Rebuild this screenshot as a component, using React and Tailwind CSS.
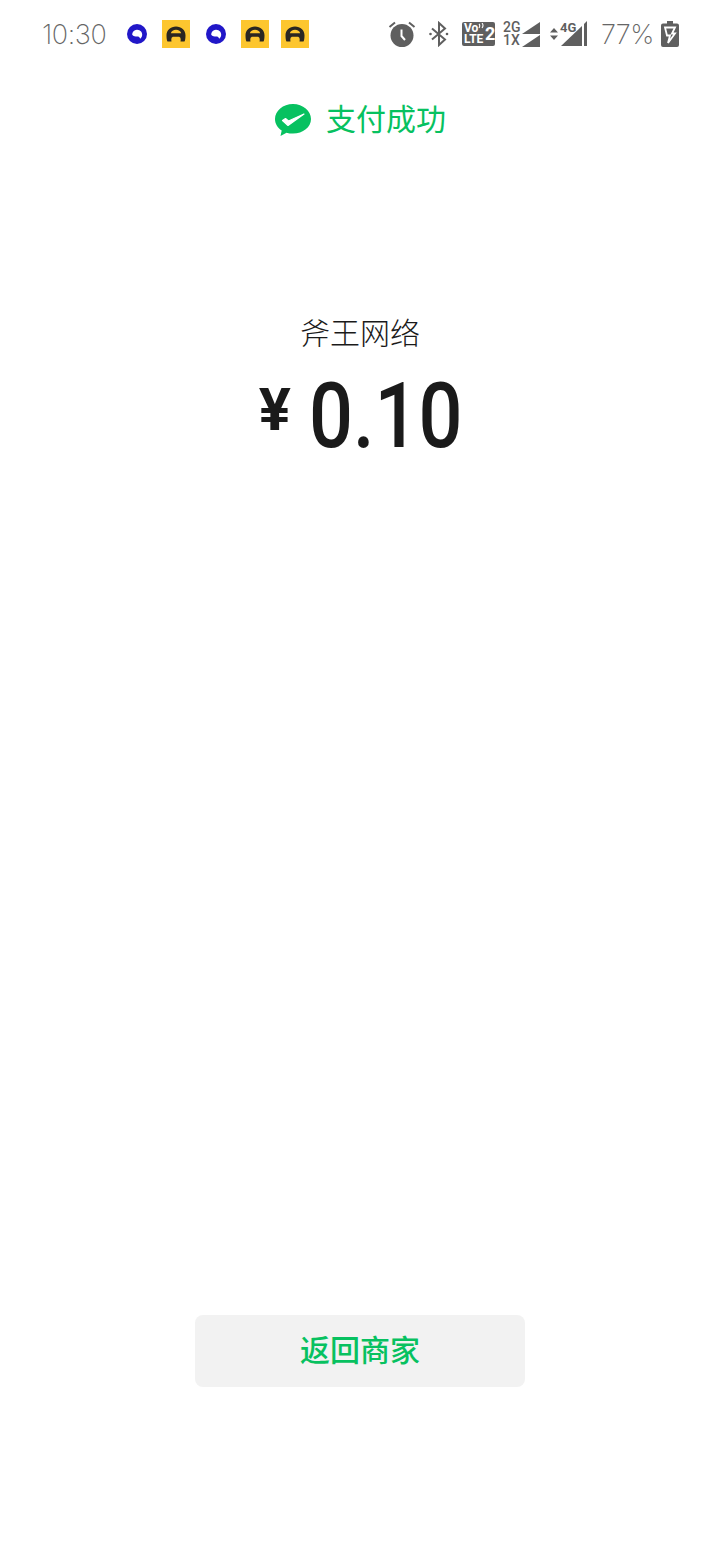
const cjk = "font-['Noto_Sans_CJK_SC',sans-serif]";

function RingIcon() {
  return (
    <svg width="20" height="20" viewBox="0 0 20 20" className="shrink-0">
      <circle cx="10" cy="10" r="10" fill="#2117c8" />
      <path d="M5.200 10.800a5 5 0 1 1 8 3.900c-.5-1.700-1.600-2.200-3-2.200-1.900 0-3.800-.2-5-1.700z" fill="#fff" />
    </svg>
  );
}

function CarIcon() {
  return (
    <svg width="28" height="28" viewBox="0 0 28 28" className="shrink-0">
      <rect width="28" height="28" fill="#fdc62f" />
      <path d="M5.500 21.500c-.7-1.200-1-3.200-1-6.200 0-5.200 4.100-8.800 9.500-8.800s9.500 3.600 9.500 8.800c0 3-.3 5-1 6.200h-4c.3-1 .3-2.200 0-3.200-.3-1-1-1.500-2-1.500h-5c-1 0-1.700.5-2 1.500-.3 1-.3 2.200 0 3.200z" fill="#2b2622" />
      <path d="M8.800 13.200c.6-2.200 2.700-3.500 5.200-3.500s4.600 1.300 5.200 3.500z" fill="#fdc62f" />
    </svg>
  );
}

function AlarmIcon() {
  return (
    <svg width="28" height="28" viewBox="0 0 28 28" className="shrink-0">
      <circle cx="14" cy="15.500" r="11.500" fill="#5f5f5f" />
      <path d="M1.500 7 7 2.500M26.500 7 21 2.500" stroke="#5f5f5f" strokeWidth="2" fill="none" />
      <path d="M13.500 9.500v6.500l3.500 4" stroke="#fff" strokeWidth="2" fill="none" />
    </svg>
  );
}

function BluetoothIcon() {
  return (
    <svg width="20" height="26" viewBox="0 0 20 26" className="shrink-0">
      <path d="M3 7.500 16 18.500 10 24V2l6 5.500L3 18.500" fill="none" stroke="#5f5f5f" strokeWidth="2" />
      <circle cx="1.500" cy="13" r="1.300" fill="#5f5f5f" />
      <circle cx="18" cy="13" r="1.300" fill="#5f5f5f" />
    </svg>
  );
}

function VolteIcon() {
  return (
    <div className="relative h-[24px] w-[33px] shrink-0 rounded-[2px] bg-[#5f5f5f] font-['Roboto',sans-serif] font-bold text-white">
      <span className="absolute left-[2px] top-[0px] text-[12px] leading-[12px]">Vo</span>
      <svg width="6" height="6" viewBox="0 0 6 6" className="absolute left-[16px] top-[1px]">
        <path d="M1 1q1.500 1.500 0 4M4 0q2 2.500 0 5" fill="none" stroke="#fff" strokeWidth="1.100" />
      </svg>
      <span className="absolute left-[2px] top-[11px] text-[12px] leading-[12px]">LTE</span>
      <span className="absolute left-[23px] top-[3px] text-[18px] leading-[18px]">2</span>
    </div>
  );
}

function DualSignal() {
  return (
    <div className="flex h-[26px] w-[37px] shrink-0 flex-col justify-between font-['Roboto',sans-serif] text-[14px] font-medium leading-[13px] text-[#5f5f5f]">
      {['2G', '1X'].map((label) => (
        <div key={label} className="flex items-center justify-between">
          <span>{label}</span>
          <svg width="18" height="12" viewBox="0 0 18 12">
            <path d="M0 12 18 0v12z" fill="#5f5f5f" />
          </svg>
        </div>
      ))}
    </div>
  );
}

function Signal4G() {
  return (
    <div className="relative h-[26px] w-[38px] shrink-0">
      <svg width="38" height="26" viewBox="0 0 38 26" className="absolute left-0 top-0">
        <path d="M1 11.500 5 7l4 4.500zM1 14.500 5 19l4-4.500z" fill="#5f5f5f" />
        <path d="M12 25 33 5v20z" fill="#5f5f5f" />
        <path d="M35 3 38 0v25h-3z" fill="#5f5f5f" />
      </svg>
      <span className="absolute left-[11px] top-[0px] font-['Roboto',sans-serif] text-[13px] font-bold leading-[14px] text-[#5f5f5f]">4G</span>
    </div>
  );
}

function BatteryIcon() {
  return (
    <svg width="18" height="26" viewBox="0 0 18 26" className="shrink-0">
      <path d="M6 0h6v2.500h4a2 2 0 0 1 2 2V24a2 2 0 0 1-2 2H2a2 2 0 0 1-2-2V4.500a2 2 0 0 1 2-2h4z" fill="#5f5f5f" />
      <path d="M4 6.500h10l-3 6h3L7 22l2-7.500H6z" fill="none" stroke="#fff" strokeWidth="1.800" />
    </svg>
  );
}

function WechatCheck() {
  return (
    <svg width="38" height="34" viewBox="0 0 38 34" className="shrink-0">
      <path d="M19 1C9 1 1 7.800 1 16c0 4.700 2.600 8.800 6.700 11.600L6.500 33l6-3.300c2 .6 4.200.9 6.500.9 10 0 18-6.600 18-14.600S29 1 19 1z" fill="#07c160" />
      <path d="M8.500 17.500 14 22.500 30 11 14.500 18l-3-2.500z" fill="#fff" stroke="#fff" strokeWidth="1.200" strokeLinejoin="round" />
    </svg>
  );
}

export default function App() {
  return (
    <div className="flex h-[1560px] w-[720px] flex-col items-center overflow-hidden bg-white">
      {/* status bar */}
      <div className="flex h-[68px] w-full items-center justify-between pl-[42px] pr-[41px] text-[#666666]">
        <div className="flex items-center">
          <span className="mt-[2px] w-[65px] font-['Inter',sans-serif] text-[27px] font-[250] tracking-[-0.4px]">10:30</span>
          <div className="ml-[20px] flex items-center">
            <RingIcon />
            <div className="ml-[15px]"><CarIcon /></div>
            <div className="ml-[16px]"><RingIcon /></div>
            <div className="ml-[15px]"><CarIcon /></div>
            <div className="ml-[12px]"><CarIcon /></div>
          </div>
        </div>
        <div className="flex items-center">
          <AlarmIcon />
          <div className="ml-[13px]"><BluetoothIcon /></div>
          <div className="ml-[13px]"><VolteIcon /></div>
          <div className="ml-[8px]"><DualSignal /></div>
          <div className="ml-[9px]"><Signal4G /></div>
          <span className="ml-[14px] mt-[2px] w-[52px] font-['Inter',sans-serif] text-[27px] font-[250] tracking-[-0.6px]">77%</span>
          <div className="ml-[8px]"><BatteryIcon /></div>
        </div>
      </div>

      {/* result */}
      <div className="mt-[34px] flex h-[36px] items-center gap-[14px]">
        <WechatCheck />
        <span className={`${cjk} mb-[6px] text-[30px] leading-[36px] text-[#07c160]`}>支付成功</span>
      </div>

      <div className={`${cjk} mt-[173px] text-[30px] font-light leading-[40px] text-[#1a1a1a]`}>斧王网络</div>

      <div className="mt-[26px] flex h-[80px] items-center font-['Roboto',sans-serif] font-medium leading-none text-[#1a1a1a]">
        <span className="mb-[14px] mr-[18px] text-[60px] font-bold">¥</span>
        <span className="mr-[-26px] origin-left scale-x-[0.86] text-[90px]">0.10</span>
      </div>

      {/* bottom button */}
      <div className="mt-[858px] flex h-[72px] w-[330px] items-center justify-center rounded-[8px] bg-[#f2f2f2]">
        <span className={`${cjk} mb-[6px] text-[30px] font-medium text-[#07c160]`}>返回商家</span>
      </div>
    </div>
  );
}
